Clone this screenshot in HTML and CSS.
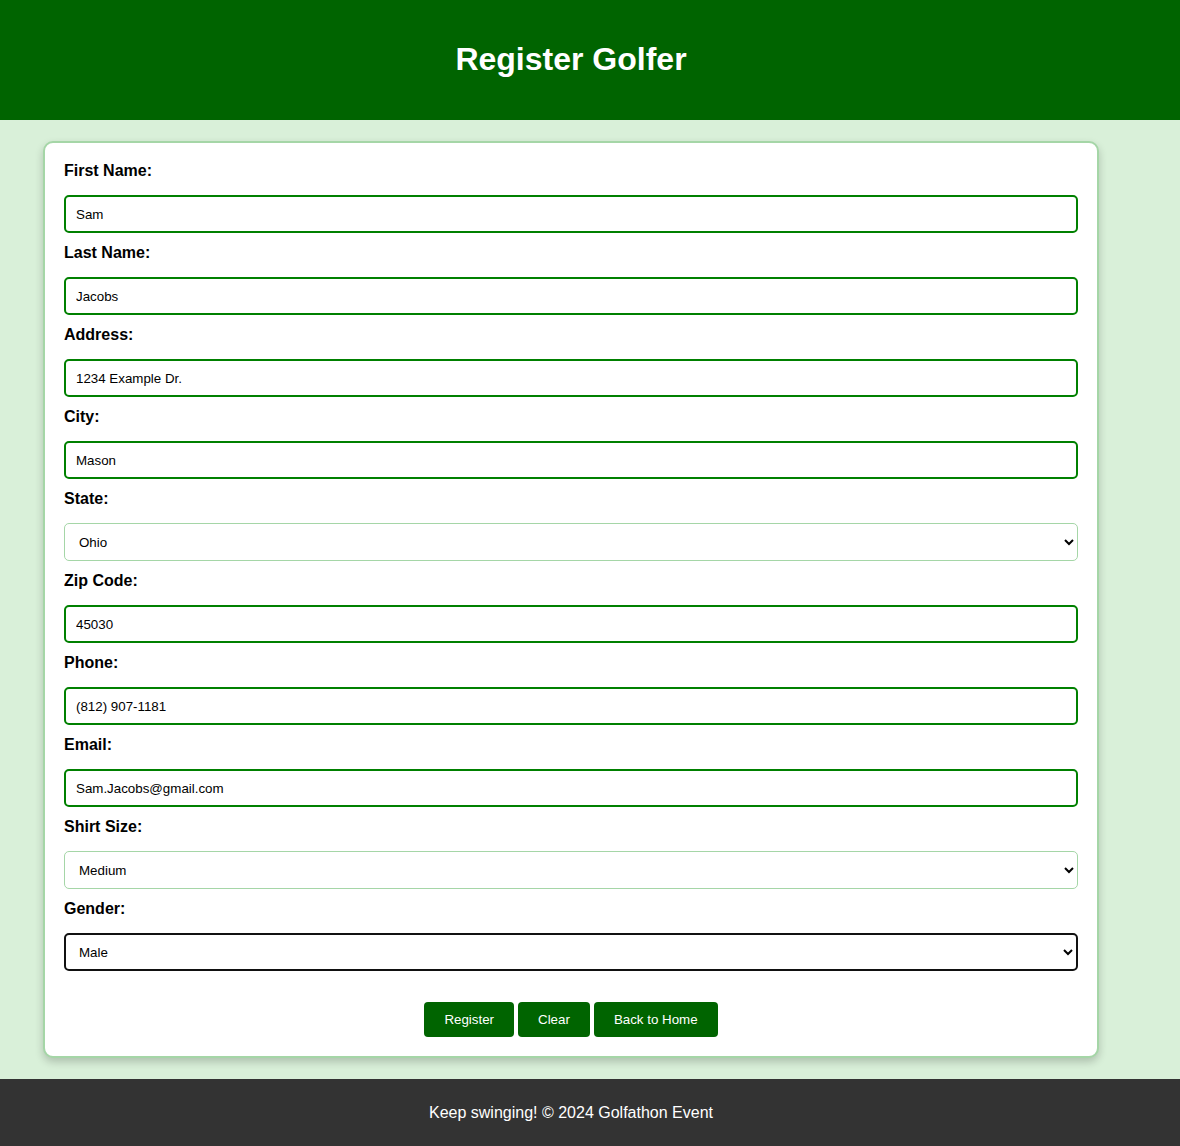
FILE: index.html
```html
<!DOCTYPE html>
<html lang="en">
<head>
<meta charset="utf-8">
<title>Register Golfer</title>
<link rel="stylesheet" href="styles.css">
</head>
<body>
<header class="site-header">
  <h1 class="title">Register Golfer</h1>
</header>
<main class="main">
  <form class="card">
    <label class="label" for="fn">First Name:</label>
    <input class="field" id="fn" type="text" value="Sam">
    <label class="label" for="ln">Last Name:</label>
    <input class="field" id="ln" type="text" value="Jacobs">
    <label class="label" for="ad">Address:</label>
    <input class="field" id="ad" type="text" value="1234 Example Dr.">
    <label class="label" for="ci">City:</label>
    <input class="field" id="ci" type="text" value="Mason">
    <label class="label" for="st">State:</label>
    <select class="dropdown" id="st"><option>Ohio</option></select>
    <label class="label" for="zc">Zip Code:</label>
    <input class="field" id="zc" type="text" value="45030">
    <label class="label" for="ph">Phone:</label>
    <input class="field" id="ph" type="text" value="(812) 907-1181">
    <label class="label" for="em">Email:</label>
    <input class="field" id="em" type="text" value="Sam.Jacobs@gmail.com">
    <label class="label" for="ss">Shirt Size:</label>
    <select class="dropdown" id="ss"><option>Medium</option></select>
    <label class="label" for="ge">Gender:</label>
    <select class="dropdown dropdown-focused" id="ge"><option>Male</option></select>
    <div class="actions">
      <button type="button" class="btn">Register</button>
      <button type="button" class="btn">Clear</button>
      <button type="button" class="btn">Back to Home</button>
    </div>
  </form>
</main>
<footer class="site-footer">Keep swinging! © 2024 Golfathon Event</footer>
</body>
</html>
```
FILE: styles.css
```css
* { box-sizing: border-box; }
html, body { margin: 0; padding: 0; }
body {
  font-family: "Liberation Sans", Arial, sans-serif;
  background: #d9f0d9;
  color: #000;
}
.site-header {
  background: #006400;
  height: 120px;
  display: flex;
  align-items: center;
  justify-content: center;
  padding-right: 38px;
}
.title {
  margin: 0;
  color: #fff;
  font-size: 32px;
  font-weight: bold;
  line-height: 37px;
  position: relative;
  top: -1px;
}
.main {
  padding: 21px 0 21px 43px;
}
.card {
  width: 1056px;
  background: #fff;
  border: 2px solid #a5d6a7;
  border-radius: 10px;
  padding: 19px;
  box-shadow: 0 4px 8px rgba(0, 0, 0, 0.2);
  display: flex;
  flex-direction: column;
}
.label {
  display: block;
  font-weight: bold;
  font-size: 16px;
  line-height: 18px;
  margin-bottom: 15px;
}
.field {
  display: block;
  width: 100%;
  height: 38px;
  padding: 0 10px;
  border: 2px solid #008000;
  border-radius: 5px;
  font-family: "Liberation Sans", Arial, sans-serif;
  font-size: 13.333px;
  color: #000;
  margin: 0 0 11px;
  background: #fff;
}
.dropdown {
  display: block;
  width: 100%;
  height: 38px;
  min-height: 38px;
  padding: 0 10px;
  border: 1px solid #a5d6a7;
  border-radius: 5px;
  font-family: "Liberation Sans", Arial, sans-serif;
  font-size: 13.333px;
  color: #000;
  margin: 0 0 11px;
  background: #fff;
}
.dropdown-focused {
  border: 2px solid #111;
  padding: 0 9px;
}
.actions {
  display: flex;
  justify-content: center;
  gap: 4px;
  margin-top: 20px;
}
.btn {
  background: #006400;
  color: #fff;
  border: none;
  border-radius: 4px;
  height: 35px;
  padding: 0 20px;
  font-family: "Liberation Sans", Arial, sans-serif;
  font-size: 13.333px;
  cursor: pointer;
}
.site-footer {
  background: #333;
  color: #fff;
  text-align: center;
  font-size: 16px;
  line-height: 18px;
  padding: 25px 38px 24px 0;
}
```
